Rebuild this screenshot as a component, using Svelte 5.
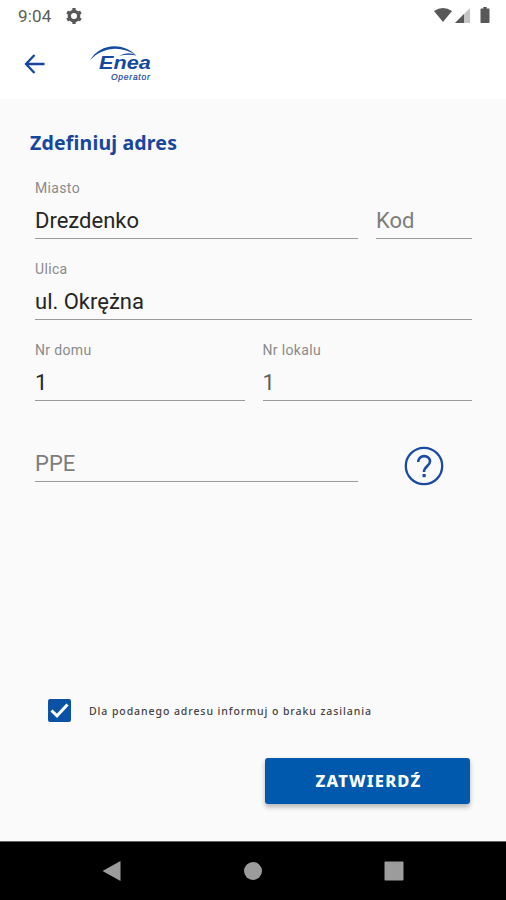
<script>
  let address = $state({
    city: 'Drezdenko',
    code: '',
    street: 'ul. Okrężna',
    house: '1',
    flat: '1',
    ppe: ''
  });
  let notify = $state(true);
</script>

{#snippet field(name, label, size = '')}
  <label class="field {size}">
    <span class="field-label">{address[name] ? label : ''}</span>
    <input class="field-input {name}" type="text" placeholder={label} bind:value={address[name]} />
  </label>
{/snippet}

<div class="screen">
  <!-- Status bar -->
  <div class="status-bar">
    <span class="time">9:04</span>
    <svg class="gear" width="20" height="20" viewBox="0 0 24 24" aria-hidden="true">
      <g transform="translate(12 12)">
        <circle r="5.6" />
        <path d="M-2 -6V-9.500H2V-6M-2 6V9.500H2V6" />
        <path transform="rotate(60)" d="M-2 -6V-9.500H2V-6M-2 6V9.500H2V6" />
        <path transform="rotate(120)" d="M-2 -6V-9.500H2V-6M-2 6V9.500H2V6" />
      </g>
    </svg>
    <svg class="signals" width="60" height="20" viewBox="0 0 60 20" aria-hidden="true">
      <path d="M1 5Q10 -1 19 5L10 16z" />
      <path d="M37 2v15H22z" opacity="0.35" />
      <path d="M31 8v9h-9z" />
      <path d="M48.300 2.500h2V1h3.400v1.500h2q.8 0 .8.800v13q0 .8-.8.800h-7.400q-.8 0-.8-.8v-13q0-.8.8-.8z" />
    </svg>
  </div>

  <!-- App bar -->
  <header class="app-bar">
    <button class="back" type="button" aria-label="Wstecz">
      <svg width="22" height="22" viewBox="0 0 22 22">
        <path d="M20.500 11H2.500M10.500 2L2 11l8.500 9" />
      </svg>
    </button>
    <div class="logo">
      <svg class="logo-arc" width="64" height="16" viewBox="0 0 64 16" aria-hidden="true">
        <path d="M0 14.500C9-1.500 31-5 46.500 9.500 31-1 12 1 0 14.500z" />
        <path d="M29 10Q38 5 46.500 9.500 37 8 29 10z" />
      </svg>
      <span class="logo-name">Enea</span>
      <span class="logo-sub">Operator</span>
    </div>
  </header>

  <main class="content">
    <h1>Zdefiniuj adres</h1>

    <div class="form">
      <div class="row">
        {@render field('city', 'Miasto')}
        {@render field('code', 'Kod', 'short')}
      </div>
      <div class="row">
        {@render field('street', 'Ulica')}
      </div>
      <div class="row">
        {@render field('house', 'Nr domu')}
        {@render field('flat', 'Nr lokalu')}
      </div>
      <div class="row">
        {@render field('ppe', 'PPE')}
        <div class="help-cell">
          <button class="help" type="button" aria-label="Pomoc">
            <svg width="40" height="40" viewBox="0 0 40 40">
              <circle cx="20" cy="20" r="18.200" />
              <path d="M14.200 16C14 8.300 26.200 8.300 26 15.500C26 20 20 20.200 20 26" />
              <rect x="18.500" y="28" width="3.200" height="3.200" />
            </svg>
          </button>
        </div>
      </div>
    </div>

    <label class="consent">
      <input type="checkbox" bind:checked={notify} />
      <span class="box" class:checked={notify}>
        {#if notify}
          <svg width="23" height="23" viewBox="0 0 23 23"><path d="M3.500 11.500l5.500 5.300L19.500 5.500" /></svg>
        {/if}
      </span>
      <span class="consent-text">Dla podanego adresu informuj o braku zasilania</span>
    </label>

    <button class="submit" type="button">ZATWIERDŹ</button>
  </main>

  <!-- System navigation -->
  <nav class="nav-bar">
    <svg width="20" height="22" viewBox="0 0 20 22"><path d="M18.500 1v20L.500 11z" /></svg>
    <svg width="20" height="22" viewBox="0 0 20 22"><circle cx="10" cy="11" r="9" /></svg>
    <svg width="20" height="22" viewBox="0 0 20 22"><rect x=".5" y="1.500" width="19" height="19" rx="1" /></svg>
  </nav>
</div>

<style>
  :global(body) {
    margin: 0;
  }

  .screen {
    width: 506px;
    height: 900px;
    display: flex;
    flex-direction: column;
    background: #fafafa;
    font-family: Roboto, sans-serif;
    overflow: hidden;
  }

  button {
    padding: 0;
    border: none;
    background: none;
    cursor: pointer;
  }

  svg {
    display: block;
    flex-shrink: 0;
  }

  .status-bar {
    height: 32px;
    flex-shrink: 0;
    box-sizing: border-box;
    padding: 0 13px 0 18px;
    display: flex;
    align-items: center;
    background: #ffffff;
    color: #5c5c5c;
    fill: #585858;
  }

  .time {
    width: 46px;
    font-size: 17px;
    letter-spacing: 0.2px;
  }

  .gear circle {
    fill: none;
    stroke: #585858;
    stroke-width: 4;
  }

  .signals {
    margin-left: auto;
  }

  .app-bar {
    height: 67px;
    flex-shrink: 0;
    box-sizing: border-box;
    padding: 14px 0 0 24px;
    display: flex;
    align-items: flex-start;
    background: #ffffff;
  }

  .back {
    margin-top: 7px;
  }

  .back path {
    fill: none;
    stroke: #1746a0;
    stroke-width: 2.300;
  }

  .logo {
    width: 64px;
    margin-left: 44px;
    display: flex;
    flex-direction: column;
    color: #1549a0;
    fill: #1549a0;
  }

  .logo-arc {
    margin-bottom: -7px;
  }

  .logo-name {
    height: 16px;
    margin-left: 9px;
    font: italic bold 19px/16px "Liberation Sans", sans-serif;
    transform: scaleX(1.14);
    transform-origin: left;
  }

  .logo-sub {
    height: 9px;
    margin: 2px 0 0 21px;
    font: italic 8.500px/9px "Liberation Sans", sans-serif;
    letter-spacing: 0.75px;
    -webkit-text-stroke: 0.2px #1549a0;
  }

  .content {
    flex: 1;
    display: flex;
    flex-direction: column;
    padding: 29px 34px 0 35px;
  }

  h1 {
    margin: 0 0 0 -5px;
    height: 30px;
    font: bold 19.500px/30px "Noto Sans", sans-serif;
    letter-spacing: 0.18px;
    color: #1746a0;
  }

  .row {
    display: flex;
    gap: 18px;
  }

  .field {
    flex: 1;
    min-width: 0;
    height: 81px;
    box-sizing: border-box;
    padding-top: 21px;
    display: flex;
    flex-direction: column;
    justify-content: space-between;
    border-bottom: 1px solid #9a9a9a;
  }

  .field.short {
    flex: 0 0 96px;
  }

  .field-label {
    height: 18px;
    font-size: 14px;
    line-height: 18px;
    letter-spacing: 0.35px;
    color: #8a8a8a;
  }

  .field-input {
    width: 100%;
    height: 36px;
    box-sizing: border-box;
    padding: 1px 0 0;
    border: none;
    outline: none;
    background: transparent;
    font: 22px Roboto, sans-serif;
    color: #262626;
  }

  .field-input.flat {
    color: #5f5f5f;
  }

  .field-input::placeholder {
    color: #7d7d7d;
    opacity: 1;
  }

  .help-cell {
    width: 96px;
    display: flex;
    justify-content: center;
    align-items: flex-end;
  }

  .help {
    margin-bottom: -4px;
  }

  .help circle,
  .help path {
    fill: none;
    stroke: #1d4ba4;
    stroke-width: 2.300;
  }

  .help path {
    stroke-width: 2.600;
  }

  .help rect {
    fill: #1d4ba4;
  }

  .consent {
    margin: auto 0 36px 13px;
    display: flex;
    align-items: center;
    cursor: pointer;
  }

  .consent input {
    position: absolute;
    opacity: 0;
  }

  .box {
    width: 23px;
    height: 23px;
    box-sizing: border-box;
    border: 2px solid #0b52a5;
    border-radius: 2px;
    display: flex;
    align-items: center;
    justify-content: center;
  }

  .box.checked {
    background: #0b52a5;
  }

  .box path {
    fill: none;
    stroke: #ffffff;
    stroke-width: 3;
  }

  .consent-text {
    margin-left: 18px;
    font: 500 10.500px "Noto Sans", sans-serif;
    letter-spacing: 0.92px;
    color: #444444;
    white-space: nowrap;
  }

  .submit {
    width: 205px;
    height: 46px;
    align-self: flex-end;
    margin: 0 2px 37px 0;
    padding: 0 0 2px 2px;
    border-radius: 3px;
    background: #0059ac;
    box-shadow: 0 3px 5px rgba(0, 0, 0, 0.28);
    font: 800 16.500px "Noto Sans", sans-serif;
    letter-spacing: 1.2px;
    color: #ffffff;
  }

  .nav-bar {
    height: 59px;
    flex-shrink: 0;
    box-sizing: border-box;
    padding: 0 102px;
    display: flex;
    align-items: center;
    justify-content: space-between;
    border-top: 1px solid #666666;
    background: #000000;
    fill: #9c9c9c;
  }
</style>
